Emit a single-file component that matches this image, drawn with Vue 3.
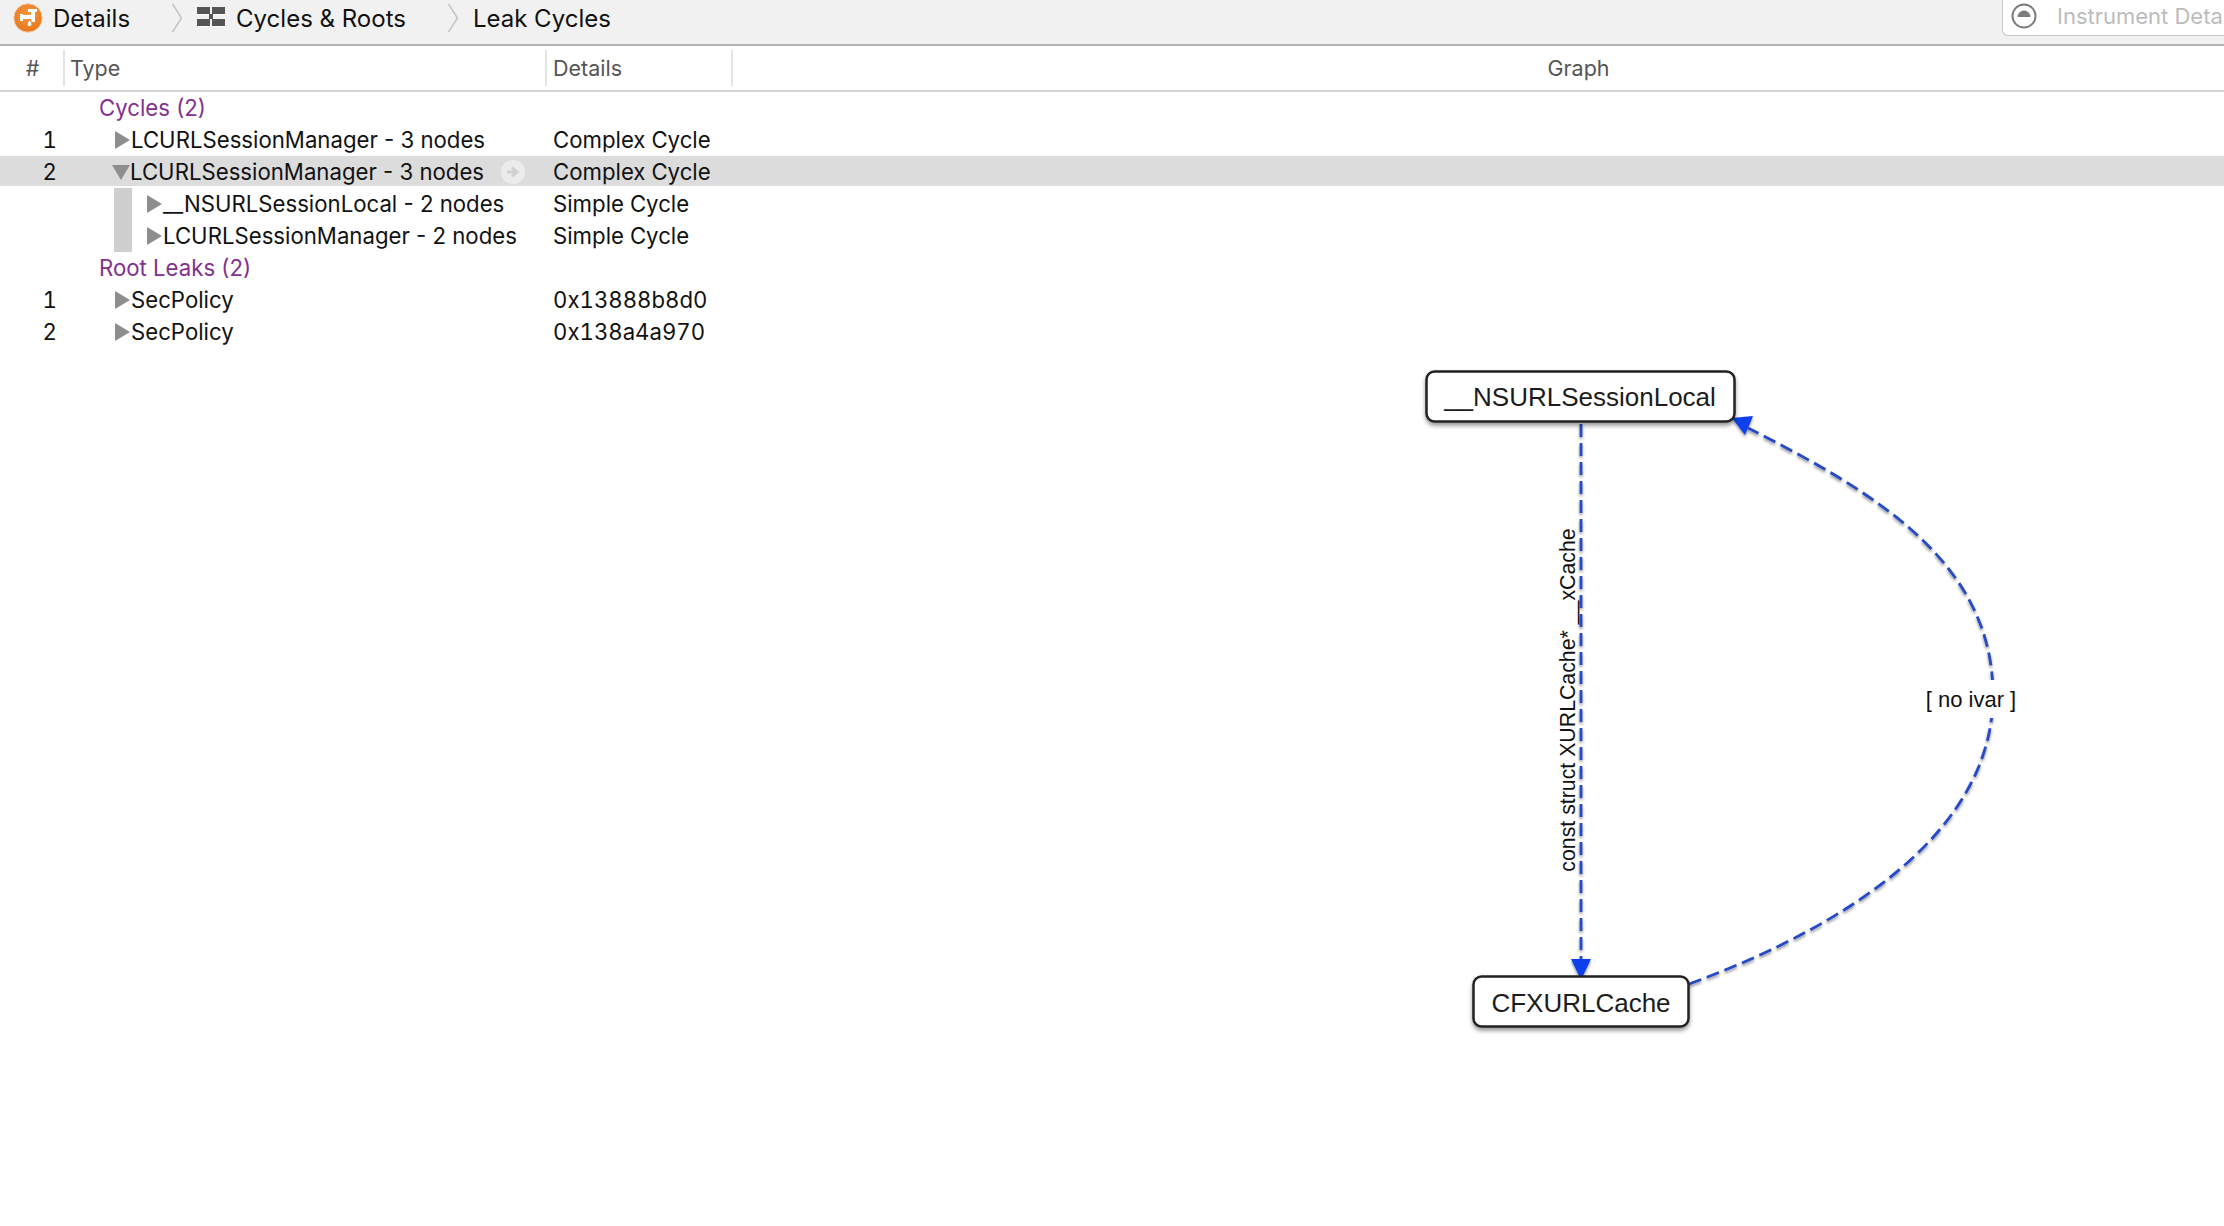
<script setup>
const crumbs = [
  { label: 'Details', icon: 'instrument' },
  { label: 'Cycles & Roots', icon: 'grid' },
  { label: 'Leak Cycles', icon: null }
]

const rows = [
  { kind: 'group', type: 'Cycles (2)' },
  { kind: 'item', num: 1, type: 'LCURLSessionManager - 3 nodes', details: 'Complex Cycle' },
  { kind: 'item', num: 2, type: 'LCURLSessionManager - 3 nodes', details: 'Complex Cycle', open: true, selected: true },
  { kind: 'child', type: '__NSURLSessionLocal - 2 nodes', details: 'Simple Cycle' },
  { kind: 'child', type: 'LCURLSessionManager - 2 nodes', details: 'Simple Cycle' },
  { kind: 'group', type: 'Root Leaks (2)' },
  { kind: 'item', num: 1, type: 'SecPolicy', details: '0x13888b8d0' },
  { kind: 'item', num: 2, type: 'SecPolicy', details: '0x138a4a970' }
]
</script>

<template>
  <div class="page">
    <header class="toolbar">
      <nav class="crumbs">
        <div v-for="(crumb, index) in crumbs" :key="crumb.label" class="crumb">
          <svg v-if="crumb.icon === 'instrument'" class="app-icon" viewBox="0 0 30 30">
            <defs>
              <radialGradient id="orange" cx="50%" cy="40%" r="60%">
                <stop offset="0" stop-color="#f59a42" />
                <stop offset="1" stop-color="#e8771d" />
              </radialGradient>
            </defs>
            <circle cx="15" cy="15" r="14.200" fill="url(#orange)" stroke="#f3c9a2" stroke-width="1" />
            <path d="M7 11h3v1h8V9h-3V6h9v3h-2v10h-4v-3H10v2H7z" fill="#fff" />
            <path d="M16.500 16.500c1.600 2.200 2.500 3.500 2.500 4.700a2.500 2.500 0 0 1-5 0c0-1.200.9-2.500 2.500-4.700z" fill="#fff" stroke="#e8771d" stroke-width="1" />
          </svg>
          <svg v-if="crumb.icon === 'grid'" class="grid-icon" viewBox="0 0 28 20">
            <path d="M0 6h28v2H0zM0 19h28v1H0z" fill="#fff" />
            <path d="M0 0h13v7H0zM15 0h13v7H15zM0 12h13v7H0zM15 12h13v7H15zM12 7h4v5h-4z" fill="#555" />
          </svg>
          <span class="crumb-label">{{ crumb.label }}</span>
          <svg v-if="index < crumbs.length - 1" class="chevron" viewBox="0 0 12 30">
            <path d="M1.500 1l9 14-9 14" fill="none" stroke="#c4c4c4" stroke-width="1.500" />
          </svg>
        </div>
      </nav>
      <div class="search">
        <svg class="search-icon" viewBox="0 0 26 26">
          <circle cx="13" cy="13" r="11.500" fill="#fff" stroke="#7d7d7d" stroke-width="2" />
          <path d="M6.500 14a6.500 6.500 0 0 1 13 0z" fill="#7d7d7d" />
        </svg>
        <span class="search-text">Instrument Deta</span>
      </div>
    </header>

    <div class="table-head">
      <div class="head-cell head-num">#</div>
      <div class="head-cell head-type">Type</div>
      <div class="head-cell head-details">Details</div>
      <div class="head-cell head-graph">Graph</div>
    </div>

    <main class="content">
      <div
        v-for="(row, index) in rows"
        :key="index"
        class="row"
        :class="[row.kind, { selected: row.selected }]"
      >
        <div class="num">{{ row.num }}</div>
        <div class="type">
          <span v-if="row.kind === 'child'" class="indent"></span>
          <span v-if="row.kind !== 'group'" class="tri" :class="{ open: row.open }"></span>
          <span class="label">{{ row.type }}</span>
          <svg v-if="row.selected" class="go" viewBox="0 0 24 24">
            <circle cx="12" cy="12" r="12" fill="#ececec" />
            <path d="M6 12h8M11 7.500l5 4.500-5 4.500" fill="none" stroke="#d0d0d0" stroke-width="3" />
          </svg>
        </div>
        <div class="details">{{ row.details }}</div>
      </div>

      <svg class="graph" viewBox="0 0 2224 1134">
        <defs>
          <filter id="soft" x="-10%" y="-10%" width="120%" height="130%">
            <feDropShadow dx="0" dy="2" stdDeviation="1.800" flood-color="#000" flood-opacity="0.45" />
          </filter>
        </defs>
        <g transform="translate(0 -92)">
          <g filter="url(#soft)">
            <path d="M1581 424V960" class="edge" />
            <path d="M1689 984C1850 925 1993 830 1993 695C1993 560 1870 490 1748 428" class="edge" />
            <path d="M1571 959H1591L1581 980z" fill="#1140ec" />
            <path d="M1732 418L1753 416L1745 435z" fill="#1140ec" />
          </g>
          <rect x="1426.500" y="371.500" width="308" height="50" rx="8" class="node" />
          <text x="1580" y="406" text-anchor="middle" class="node-text">__NSURLSessionLocal</text>
          <rect x="1473.500" y="976.500" width="215" height="50" rx="8" class="node" />
          <text x="1581" y="1012" text-anchor="middle" class="node-text">CFXURLCache</text>
          <rect x="1922" y="680" width="98" height="38" fill="#fff" />
          <text x="1971" y="707" text-anchor="middle" class="edge-text no-ivar">[ no ivar ]</text>
          <text transform="translate(1575 700) rotate(-90)" text-anchor="middle" class="edge-text">const struct XURLCache*  __xCache</text>
        </g>
      </svg>
    </main>
  </div>
</template>

<style scoped>
.page {
  width: 2224px;
  height: 1226px;
  overflow: hidden;
  background: #fff;
  color: #111;
  font-family: Inter, "Liberation Sans", sans-serif;
  font-size: 22.200px;
  display: flex;
  flex-direction: column;
}

.toolbar {
  height: 44px;
  flex: none;
  background: #f1f1f1;
  border-bottom: 2px solid #b4b4b4;
  display: flex;
  justify-content: space-between;
  align-items: flex-start;
}

.crumbs {
  display: flex;
  height: 36px;
  align-items: center;
  padding-left: 13px;
}

.crumb {
  display: flex;
  align-items: center;
}

.app-icon {
  width: 30px;
  height: 30px;
  margin-right: 10px;
}

.grid-icon {
  width: 28px;
  height: 20px;
  margin: -2px 11px 0 0;
}

.crumb-label {
  font-size: 24px;
  color: #111;
}

.chevron {
  width: 12px;
  height: 30px;
  margin: 0 14px 0 41px;
}

.search {
  width: 222px;
  height: 36px;
  box-sizing: border-box;
  background: #fff;
  border: 1px solid #c8c8c8;
  border-top: none;
  border-right: none;
  border-bottom-left-radius: 6px;
  display: flex;
  align-items: center;
  padding: 0 0 4px 8px;
  white-space: nowrap;
  overflow: hidden;
}

.search-icon {
  width: 26px;
  height: 26px;
  flex: none;
  margin-right: 20px;
}

.search-text {
  color: #bcbcbc;
  font-size: 22px;
}

.table-head {
  height: 44px;
  flex: none;
  border-bottom: 2px solid #d2d2d2;
  display: flex;
  align-items: center;
  color: #555;
  font-size: 21.500px;
}

.head-cell {
  height: 36px;
  line-height: 37px;
  box-sizing: border-box;
}

.head-num {
  width: 65px;
  padding-left: 2px;
  text-align: center;
  border-right: 2px solid #e4e4e4;
}

.head-type {
  width: 482px;
  padding-left: 5px;
  border-right: 2px solid #e4e4e4;
}

.head-details {
  width: 186px;
  padding-left: 6px;
  border-right: 2px solid #e4e4e4;
}

.head-graph {
  flex: 1;
  text-align: center;
  padding-left: 200px;
}

.content {
  position: relative;
  flex: 1;
}

.row {
  height: 32px;
  display: flex;
  align-items: center;
  white-space: nowrap;
}

.row.selected {
  background: linear-gradient(#dcdcdc 30px, #fff 30px);
}

.num {
  width: 57px;
  text-align: right;
  flex: none;
  margin-bottom: 2px;
  font-variant-numeric: tabular-nums;
}

.label {
  margin-bottom: 2px;
}

.type {
  width: 496px;
  flex: none;
  display: flex;
  align-items: center;
  padding-left: 58px;
  box-sizing: border-box;
  height: 100%;
}

.group .type {
  padding-left: 42px;
  color: #83308f;
}

.child .type {
  padding-left: 57px;
}

.indent {
  width: 18px;
  height: 100%;
  background: #cfcfcf;
  margin-right: 15px;
}

.tri {
  width: 0;
  height: 0;
  flex: none;
  margin-right: 1px;
  border-left: 15px solid #8e8e8e;
  border-top: 9px solid transparent;
  border-bottom: 9px solid transparent;
}

.tri.open {
  margin-left: -3px;
  margin-right: 0;
  border-left: 9.500px solid transparent;
  border-right: 9.500px solid transparent;
  border-top: 15px solid #8e8e8e;
  border-bottom: none;
}

.go {
  width: 24px;
  height: 24px;
  margin-left: 17px;
}

.details {
  margin-bottom: 2px;
  font-variant-numeric: tabular-nums;
}

.graph {
  position: absolute;
  left: 0;
  top: 0;
  width: 2224px;
  height: 1134px;
  pointer-events: none;
}

.edge {
  fill: none;
  stroke: #2548c6;
  stroke-width: 2.800;
  stroke-dasharray: 13 6;
}

.node {
  fill: #fff;
  stroke: #222;
  stroke-width: 2.500;
  filter: drop-shadow(0 3px 2px rgba(0, 0, 0, 0.4));
}

.node-text {
  font-family: "Liberation Sans", Arial, sans-serif;
  font-size: 26px;
  fill: #1c1c1c;
}

.edge-text {
  font-family: "Liberation Sans", Arial, sans-serif;
  font-size: 21.300px;
  fill: #111;
  white-space: pre;
}

.no-ivar {
  font-size: 22px;
}
</style>

<style>
body {
  background: #fff;
}
</style>
